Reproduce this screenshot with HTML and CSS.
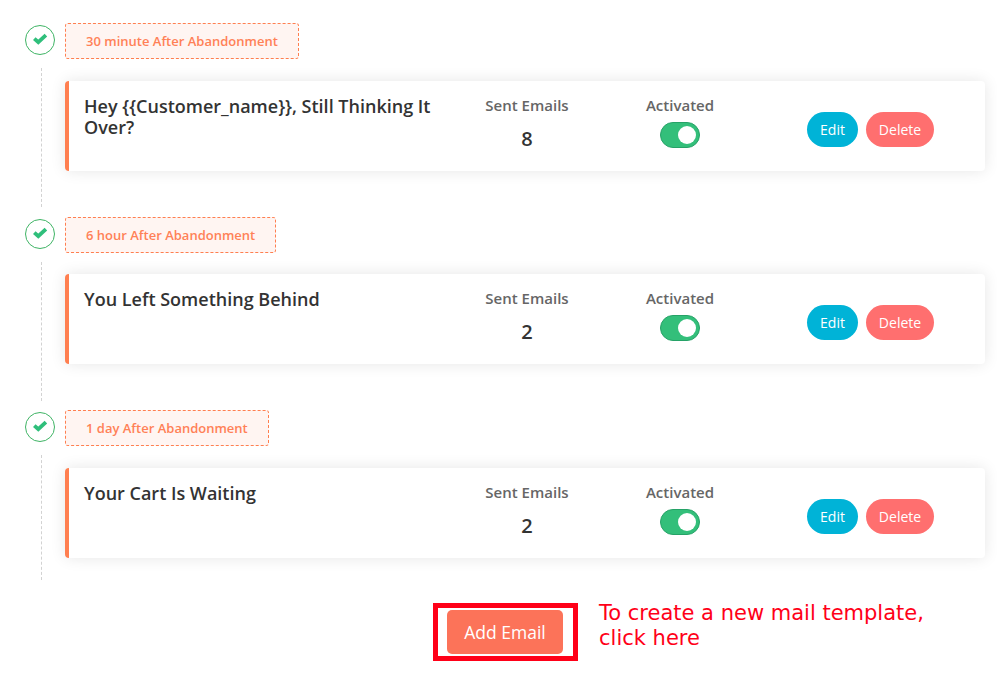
FILE: index.html
```
<!DOCTYPE html>
<html lang="en">
<head>
<meta charset="utf-8">
<title>Email templates</title>
<link rel="stylesheet" href="styles.css">
</head>
<body>
<main class="timeline">
  <section class="step">
    <div class="rail">
      <span class="check"><svg width="16" height="14" viewBox="0 0 16 14"><path d="M2.3 6.6 6.3 10.2 13.9 3.2"/></svg></span>
      <span class="line"></span>
    </div>
    <div class="content">
      <div class="delay">30 minute After Abandonment</div>
      <article class="card">
        <h2 class="title">Hey {{Customer_name}}, Still Thinking It Over?</h2>
        <div class="stat sent"><span class="label">Sent Emails</span><strong class="count">8</strong></div>
        <div class="stat state"><span class="label">Activated</span><span class="toggle"><i class="knob"></i></span></div>
        <div class="actions"><button class="btn edit">Edit</button><button class="btn delete">Delete</button></div>
      </article>
    </div>
  </section>
  <section class="step">
    <div class="rail">
      <span class="check"><svg width="16" height="14" viewBox="0 0 16 14"><path d="M2.3 6.6 6.3 10.2 13.9 3.2"/></svg></span>
      <span class="line"></span>
    </div>
    <div class="content">
      <div class="delay">6 hour After Abandonment</div>
      <article class="card">
        <h2 class="title">You Left Something Behind</h2>
        <div class="stat sent"><span class="label">Sent Emails</span><strong class="count">2</strong></div>
        <div class="stat state"><span class="label">Activated</span><span class="toggle"><i class="knob"></i></span></div>
        <div class="actions"><button class="btn edit">Edit</button><button class="btn delete">Delete</button></div>
      </article>
    </div>
  </section>
  <section class="step">
    <div class="rail">
      <span class="check"><svg width="16" height="14" viewBox="0 0 16 14"><path d="M2.3 6.6 6.3 10.2 13.9 3.2"/></svg></span>
      <span class="line"></span>
    </div>
    <div class="content">
      <div class="delay">1 day After Abandonment</div>
      <article class="card">
        <h2 class="title">Your Cart Is Waiting</h2>
        <div class="stat sent"><span class="label">Sent Emails</span><strong class="count">2</strong></div>
        <div class="stat state"><span class="label">Activated</span><span class="toggle"><i class="knob"></i></span></div>
        <div class="actions"><button class="btn edit">Edit</button><button class="btn delete">Delete</button></div>
      </article>
    </div>
  </section>
</main>
<footer class="footer">
  <div class="highlight"><button class="add">Add Email</button></div>
  <p class="note">To create a new mail template,<br>click here</p>
</footer>
</body>
</html>
```
FILE: styles.css
```
* { box-sizing: border-box; }
body {
  margin: 0;
  padding: 23px 12px 0 25px;
  background: #fff;
  font-family: "Open Sans", sans-serif;
  color: #333;
}
button { border: 0; margin: 0; font-family: inherit; }
.step { display: flex; gap: 10px; height: 193.5px; }
.step:last-child { height: 180px; }
.rail {
  width: 30px;
  padding: 2px 0 9.5px;
  display: flex;
  flex-direction: column;
}
.check {
  width: 30px;
  height: 30px;
  border: 1px solid #3fb465;
  border-radius: 50%;
  display: flex;
  align-items: center;
  justify-content: center;
}
.check svg { margin-top: -2px; }
.check path { fill: none; stroke: #2fbf7b; stroke-width: 3.8; }
.line {
  flex: 1;
  margin: 13px 0 0 16px;
  border-left: 1px dashed #d2d2d2;
}
.step:last-child .rail { padding-bottom: 10px; }
.content { width: 920px; }
.delay {
  width: fit-content;
  height: 36px;
  padding: 0 20px;
  border: 1px dashed #ff7f50;
  border-radius: 3px;
  background: #fff5f2;
  color: #ff8157;
  font-size: 13px;
  font-weight: 600;
  line-height: 35px;
}
.card {
  display: grid;
  grid-template-columns: 376px 134px 172px 1fr;
  height: 90px;
  margin-top: 21.9px;
  padding-left: 15px;
  border-left: 4px solid #ff7f50;
  border-radius: 4px;
  background: #fff;
  box-shadow: 0 0 15px rgba(0, 0, 0, .1);
}
.title { margin: 15px 0 0; font-size: 18px; font-weight: 600; line-height: 21px; }
.stat { display: flex; flex-direction: column; align-items: center; padding-top: 14px; }
.label { font-size: 15px; font-weight: 600; line-height: 21px; color: #666; }
.count { margin-top: 8px; font-size: 20px; font-weight: 600; line-height: 30px; }
.toggle {
  display: flex;
  justify-content: flex-end;
  align-items: center;
  width: 40px;
  height: 26px;
  margin-top: 6px;
  padding-right: 3px;
  border: 1px solid #26a267;
  border-radius: 13px;
  background: #33bf7a;
}
.knob { width: 18px; height: 18px; border-radius: 50%; background: #fff; }
.actions { display: flex; gap: 8px; padding: 31px 0 0 41px; }
.btn { height: 35px; padding: 0; border-radius: 18px; color: #fff; font-size: 14px; }
.edit { width: 51px; background: #00b3d7; }
.delete { width: 68px; background: #ff6f6f; }
.footer { display: flex; gap: 21px; margin-left: 408px; padding-top: 13px; }
.highlight {
  display: flex;
  width: 145px;
  height: 58px;
  padding: 2px 0 0 9px;
  border: 5px solid #ff0018;
}
.add {
  width: 116px;
  height: 44px;
  padding: 0;
  border-radius: 5px;
  background: #fc7359;
  color: #fff;
  font-size: 17.5px;
}
.note {
  margin: -2px 0 0;
  color: #ff0018;
  font-family: "DejaVu Sans", sans-serif;
  font-size: 21px;
  line-height: 25px;
}
```
